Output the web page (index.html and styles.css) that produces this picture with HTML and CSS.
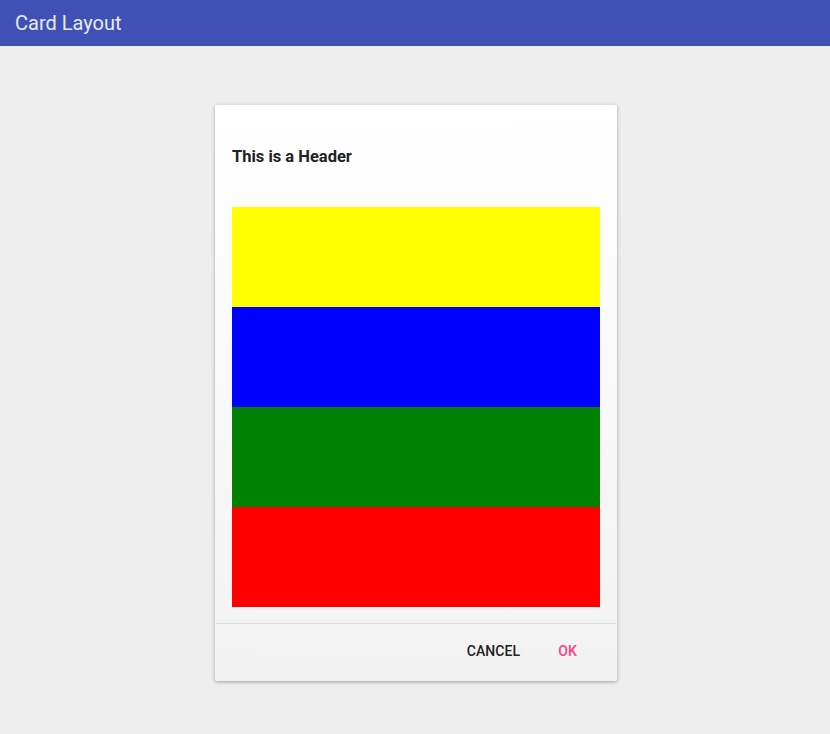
FILE: index.html
```html
<!DOCTYPE html>
<html>
<head>
<meta charset="utf-8">
<link rel="stylesheet" href="styles.css">
</head>
<body>
<header class="appbar"><span class="title">Card Layout</span></header>
<main class="stage">
  <section class="card">
    <div class="card-body">
      <h2 class="card-header">This is a Header</h2>
      <div class="bands">
        <div class="band yellow"></div>
        <div class="band blue"></div>
        <div class="band green"></div>
        <div class="band red"></div>
      </div>
    </div>
    <div class="card-actions">
      <button class="btn">CANCEL</button>
      <button class="btn accent">OK</button>
    </div>
  </section>
</main>
</body>
</html>
```
FILE: styles.css
```css
* { box-sizing: border-box; }
html, body { margin: 0; padding: 0; }
body {
  background: #eeeeee;
  font-family: Roboto, "Noto Sans", sans-serif;
  width: 830px;
  height: 734px;
  overflow: hidden;
}
.appbar {
  height: 46px;
  background: #3f51b5;
  display: flex;
  align-items: center;
  padding-left: 15px;
}
.title {
  color: #e8eaf6;
  font-size: 20px;
  font-weight: 400;
}
.stage {
  padding-top: 59px;
  padding-left: 215px;
}
.card {
  width: 402px;
  background: linear-gradient(#ffffff, #f2f2f2);
  border-radius: 2px;
  box-shadow: 0 1px 4px rgba(0,0,0,0.25), 0 1px 2px rgba(0,0,0,0.12);
}
.card-body {
  padding: 0 17px 16px;
}
.card-header {
  margin: 0;
  height: 102px;
  display: flex;
  align-items: center;
  font-size: 16.5px;
  font-weight: 700;
  color: #222;
}
.bands { display: flex; flex-direction: column; }
.band { height: 100px; }
.yellow { background: #ffff00; }
.blue { background: #0000ff; }
.green { background: #008000; }
.red { background: #ff0000; }
.card-actions {
  border-top: 1px solid #dcdcdc;
  margin: 0 1px;
  height: 58px;
  display: flex;
  justify-content: flex-end;
  align-items: center;
  gap: 0;
  padding-right: 20px;
  padding-bottom: 3px;
}
.btn {
  background: none;
  border: none;
  font-family: Roboto, "Noto Sans", sans-serif;
  font-size: 14px;
  font-weight: 500;
  color: #222;
  padding: 8px 19px;
  letter-spacing: 0.1px;
}
.btn.accent { color: #ff4081; }
```
